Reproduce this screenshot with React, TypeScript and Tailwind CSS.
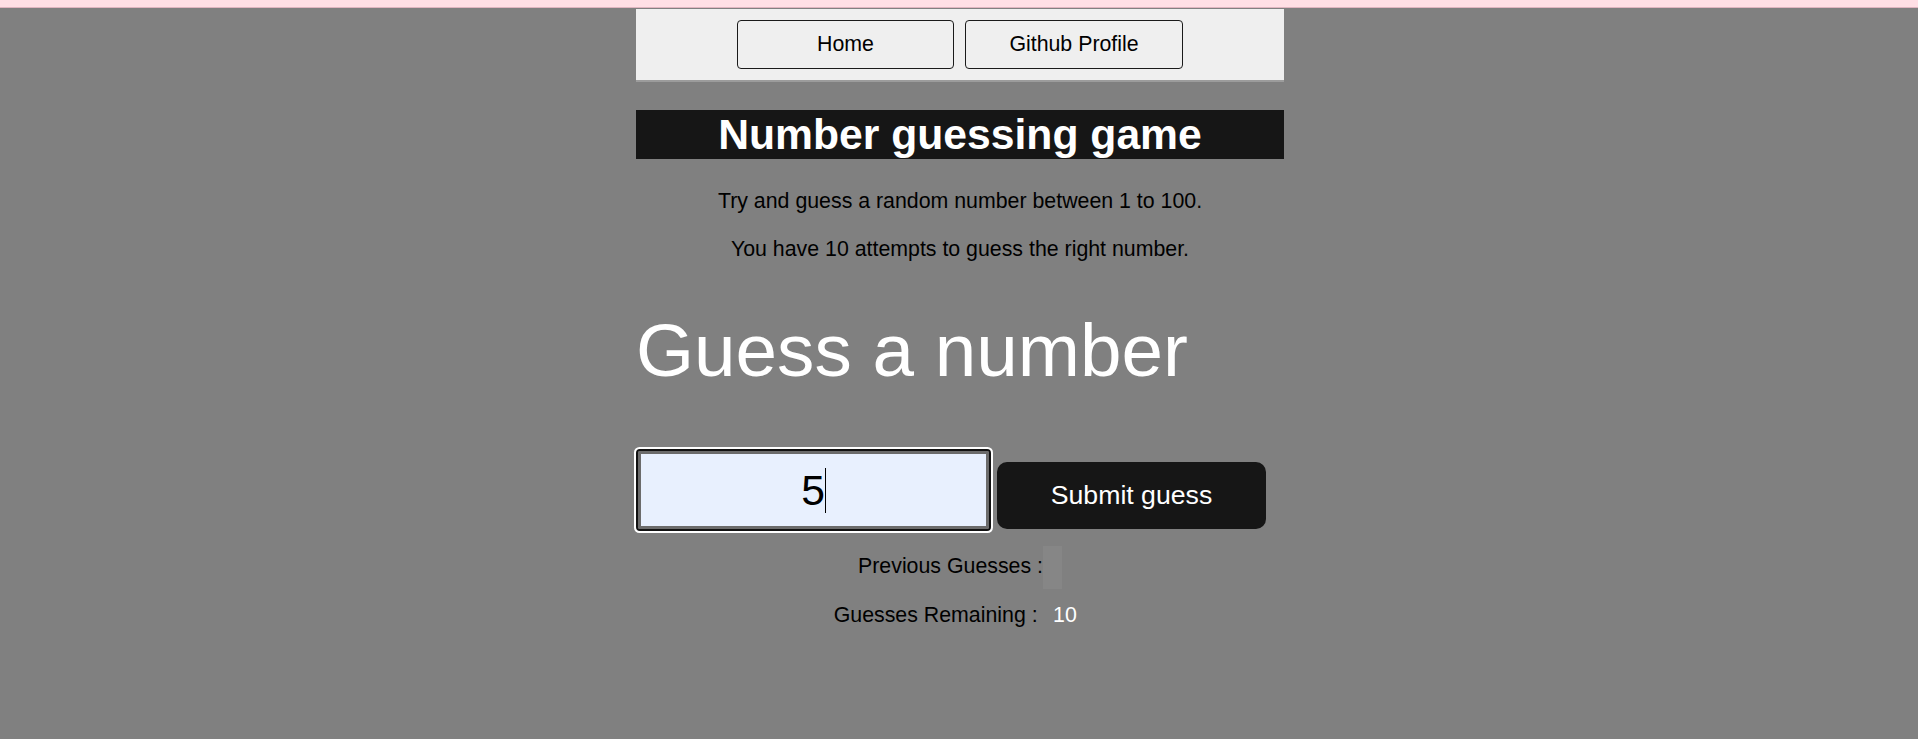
import React from 'react';

const App = () => {
  return (
    <div className="min-h-screen bg-[#808080] font-['Liberation_Sans',Arial,sans-serif] text-black">
      <div className="h-[8px] bg-[#ffdfe5] border-b border-[#e0b5c0]" />

      <div className="w-[648px] mx-auto relative left-px">
        {/* top nav */}
        <nav className="mt-px h-[73px] bg-[#efefef] border-b-2 border-[#9c9c9c] flex justify-center items-start pt-[11px] gap-[11px]">
          <button className="w-[217px] h-[49px] border border-[#1a1a1a] rounded-[4px] bg-[#efefef] text-[21.33px] leading-none text-black">
            Home
          </button>
          <button className="w-[218px] h-[49px] border border-[#1a1a1a] rounded-[4px] bg-[#efefef] text-[21.33px] leading-none text-black">
            Github Profile
          </button>
        </nav>

        <h1 className="mt-[28px] h-[49px] bg-[#161616] text-white font-bold text-[42.67px] leading-[49px] text-center">
          Number guessing game
        </h1>

        <p className="mt-[30px] text-[21.33px] leading-[24px] text-center">
          Try and guess a random number between 1 to 100.
        </p>
        <p className="mt-[24px] text-[21.33px] leading-[24px] text-center">
          You have 10 attempts to guess the right number.
        </p>

        <h2 className="mt-[46px] text-[74.67px] leading-[86px] text-white">Guess a number</h2>

        {/* guess form */}
        <div className="mt-[58px] pl-[2px] flex items-end gap-[8px]">
          <div className="w-[351px] h-[78px] border-[3px] border-[#6b6b6b] bg-[#e8f0fe] rounded-[2px] outline-2 outline-[#111111] shadow-[0_0_0_4px_#ffffff] flex items-center justify-center">
            <span className="text-[42.67px] leading-[49px] text-black">5</span>
            <span className="w-px h-[45px] bg-black" />
          </div>
          <button className="w-[269px] h-[67px] rounded-[10px] bg-[#161616] text-white text-[26.67px] leading-none">
            Submit guess
          </button>
        </div>

        <p className="mt-[25px] text-[21.33px] leading-[24.5px] text-center">
          Previous Guesses :<span className="inline-block align-middle w-[19px] h-[43px] -my-[10px] bg-[#868686]" />
        </p>
        <p className="mt-[24px] text-[21.33px] leading-[24.5px] text-center">
          Guesses Remaining : <span className="px-[9.5px] py-[9.33px] text-white">10</span>
        </p>
      </div>
    </div>
  );
};

export default App;
